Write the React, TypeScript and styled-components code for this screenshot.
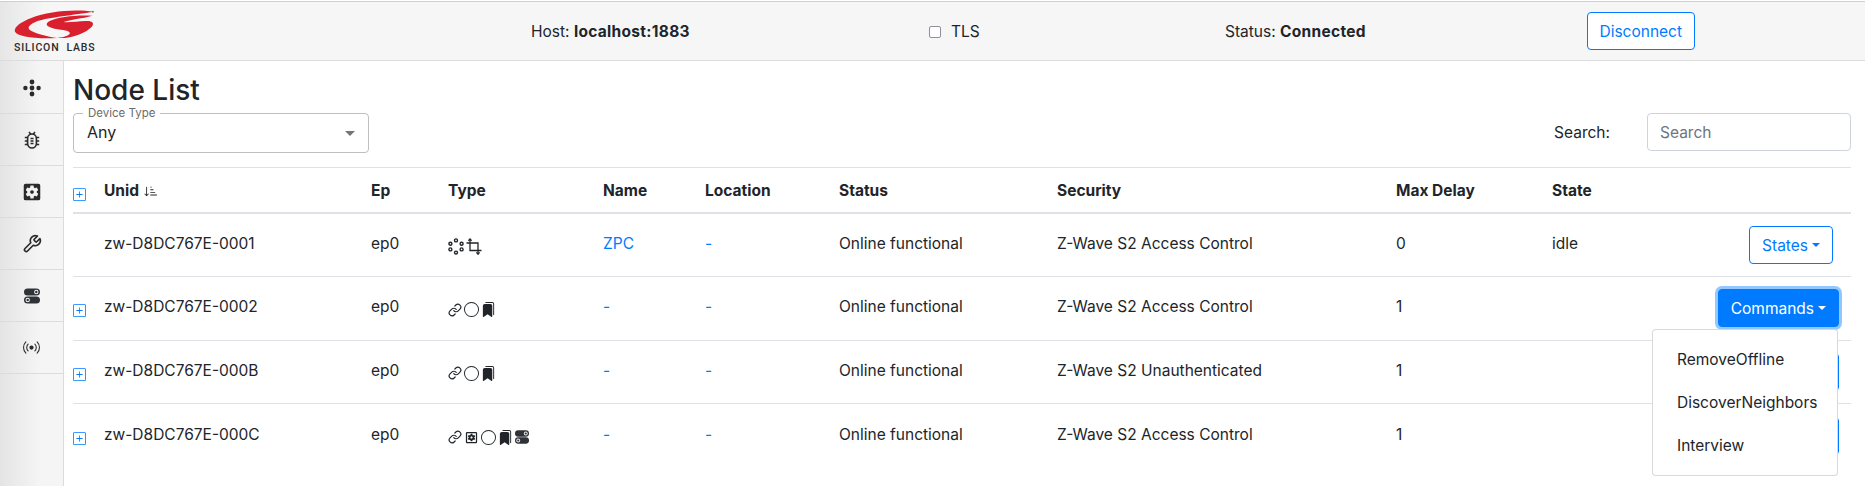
import React from "react";
import styled, {createGlobalStyle} from "styled-components";
import {BsBookmarksFill, BsBroadcast, BsCircle, BsPlusSquare, BsSortDownAlt} from "react-icons/bs";
import {FiLink, FiTool} from "react-icons/fi";
import {MdOutlineSettingsApplications, MdSettingsApplications} from "react-icons/md";

const GlobalStyle = createGlobalStyle`
    html, body {
        margin: 0;
        height: 486px;
        overflow: hidden;
        background: #fff;
        font-family: Inter, "Liberation Sans", sans-serif;
        font-size: 16px;
        color: #212529;
    }
`;

const Page = styled.div`
    width: 1865px;
    height: 486px;
    padding-top: 1px;
    box-sizing: border-box;
    display: flex;
    flex-direction: column;
    overflow: hidden;
`;

const TopBar = styled.header`
    height: 58px;
    flex: none;
    display: flex;
    align-items: center;
    border-top: 1px solid #cfcfcf;
    border-bottom: 1px solid #dcdcdc;
    background: linear-gradient(90deg, #e6e6e6 0, #f6f6f6 44px);
`;

const Logo = styled.div`
    width: 81px;
    margin-left: 14px;
    display: flex;
    flex-direction: column;
    flex: none;
`;

const LogoText = styled.span`
    font-family: Roboto, "Liberation Sans", sans-serif;
    font-size: 10.5px;
    font-weight: 500;
    line-height: 11px;
    letter-spacing: 0.85px;
    margin-top: 2px;
    color: #2b2b2b;
    white-space: pre;
`;

const BarGroup = styled.div`
    display: flex;
    align-items: center;
    margin-left: 436px;
`;

const BarItem = styled.div<{$width: number}>`
    width: ${p => p.$width}px;
    flex: none;
    display: flex;
    align-items: center;
    font-size: 15.5px;
    white-space: pre;

    b {
        letter-spacing: 0.3px;
    }
`;

const TlsBox = styled.span`
    width: 10px;
    height: 10px;
    border: 1.5px solid #8f8f9d;
    border-radius: 2px;
    background: #fff;
    margin-right: 10px;
    margin-top: 2px;
`;

const OutlineButton = styled.button`
    height: 38px;
    padding: 0 12px;
    border: 1px solid #007bff;
    border-radius: 4px;
    background: #fff;
    color: #007bff;
    font: inherit;
    font-size: 15.5px;
    display: inline-flex;
    align-items: center;
`;

const DisconnectButton = styled(OutlineButton)`
    padding: 0 11.5px;
`;

const Caret = styled.span`
    display: inline-block;
    margin-left: 4px;
    border-top: 4.8px solid currentColor;
    border-left: 4.8px solid transparent;
    border-right: 4.8px solid transparent;
`;

const SolidButton = styled(OutlineButton)<{$focused?: boolean}>`
    background: #007bff;
    color: #fff;
    box-shadow: ${p => (p.$focused ? "0 0 0 3px rgba(38, 143, 255, 0.5)" : "none")};
`;

const Body = styled.div`
    flex: 1;
    display: flex;
    min-height: 0;
    position: relative;
`;

const Sidebar = styled.nav`
    width: 63px;
    flex: none;
    padding-top: 1px;
    border-right: 1px solid #dcdcdc;
    background: linear-gradient(90deg, #e4e4e4 0, #f5f5f5 40px);
`;

const SideItem = styled.div`
    height: 51px;
    border-bottom: 1px solid #dcdcdc;
    display: flex;
    align-items: center;
    justify-content: center;
    color: #2a2a2a;
`;

const Main = styled.main`
    flex: 1;
    padding: 0 14px 0 9px;
    min-width: 0;
`;

const Title = styled.h1`
    font-size: 28px;
    font-weight: 500;
    line-height: 34px;
    margin: 12px 0 6px;
`;

const FilterRow = styled.div`
    display: flex;
    justify-content: space-between;
    align-items: flex-start;
    padding-bottom: 14px;
    border-bottom: 1px solid #dee2e6;
`;

const SelectBox = styled.div`
    width: 296px;
    height: 40px;
    box-sizing: border-box;
    border: 1px solid #bfbfbf;
    border-radius: 4px;
    padding: 0 13px 2px;
    display: flex;
    align-items: center;
    justify-content: space-between;
    position: relative;
`;

const SelectLabel = styled.span`
    position: absolute;
    top: -7px;
    left: 9px;
    padding: 0 5px;
    background: #fff;
    font-size: 11.5px;
    line-height: 13px;
    color: #6c6c6c;
`;

const SelectArrow = styled.span`
    margin-top: 2px;
    border-top: 5px solid #757575;
    border-left: 5px solid transparent;
    border-right: 5px solid transparent;
`;

const SearchGroup = styled.div`
    display: flex;
    align-items: center;
    font-size: 15.5px;
`;

const SearchInput = styled.div`
    width: 204px;
    height: 38px;
    box-sizing: border-box;
    margin-left: 37px;
    border: 1px solid #ced4da;
    border-radius: 4px;
    padding: 0 12px;
    display: flex;
    align-items: center;
    color: #6c757d;
`;

const Table = styled.table`
    width: 100%;
    border-collapse: collapse;
    table-layout: fixed;
    font-size: 15.5px;
`;

const HeadCell = styled.th`
    height: 44px;
    padding: 0;
    text-align: left;
    font-weight: 700;
    border-bottom: 2px solid #dee2e6;
    white-space: nowrap;
`;

const Cell = styled.td`
    height: 63.5px;
    box-sizing: border-box;
    padding: 0 0 3px;
    border-bottom: 1px solid #dee2e6;
    white-space: nowrap;
`;

const LastCell = styled(Cell)`
    border-bottom: none;
`;

const Link = styled.span`
    color: #007bff;
`;

const PlusIcon = styled(BsPlusSquare)`
    color: #007bff;
    display: block;
    margin-top: 8px;
`;

const TypeIcons = styled.div`
    display: flex;
    align-items: center;
    gap: 2px;
    margin-top: 6px;
`;

const ActionCell = styled.div`
    display: flex;
    justify-content: flex-end;
    padding: 3px 18px 0 0;
`;

const CommandSlot = styled(ActionCell)`
    padding-right: 12px;
`;

const StateRow = styled.div`
    display: flex;
    align-items: center;
    justify-content: space-between;
`;

const Menu = styled.div`
    position: absolute;
    left: 1652px;
    top: 268px;
    width: 186px;
    height: 147px;
    box-sizing: border-box;
    padding: 8px 0;
    background: #fff;
    border: 1px solid rgba(0, 0, 0, 0.15);
    border-radius: 4px;
`;

const MenuItem = styled.div`
    height: 43px;
    padding-left: 24px;
    display: flex;
    align-items: center;
    font-size: 15.5px;
`;

const SortIcon = styled(BsSortDownAlt)`
    margin-left: 5px;
    vertical-align: -2px;
`;

const NodesSmall = () => (
    <svg width="16" height="17" viewBox="0 0 16 17" fill="none" stroke="#212529" strokeWidth="1.4">
      <circle cx="8" cy="2.4" r="1.5"/>
      <circle cx="2.4" cy="5.8" r="1.5"/>
      <circle cx="13.6" cy="5.8" r="1.5"/>
      <circle cx="2.4" cy="11.4" r="1.5"/>
      <circle cx="13.6" cy="11.4" r="1.5"/>
      <circle cx="8" cy="14.6" r="1.5"/>
    </svg>
);

const CropArrows = () => (
    <svg width="16" height="17" viewBox="0 0 16 17" fill="none" stroke="#212529" strokeWidth="1.3">
      <path d="M4 2v10.5h11.5"/>
      <path d="M0.5 5h11.5v11"/>
      <path d="M2.4 2.8 4 1l1.6 1.8M10.4 14.4 12 16.2l1.6-1.8"/>
    </svg>
);

const NodesCross = () => (
    <svg width="18" height="18" viewBox="0 0 18 18" fill="#2a2a2a">
      <circle cx="9" cy="3" r="2.4"/>
      <circle cx="9" cy="15" r="2.4"/>
      <circle cx="2.4" cy="9" r="2.2"/>
      <circle cx="15.6" cy="9" r="2.2"/>
      <circle cx="9" cy="9" r="2.4"/>
    </svg>
);

const BugOutline = () => (
    <svg width="16" height="18" viewBox="0 0 16 18" fill="none" stroke="#2a2a2a" strokeWidth="1.6">
      <rect x="3.6" y="3" width="8.8" height="14" rx="4.4"/>
      <path d="M5 1l2 2.4M11 1 9 3.4M0.8 6.5h2.8M12.4 6.5h2.8M0.8 10h2.8M12.4 10h2.8M0.8 13.5h2.8M12.4 13.5h2.8"/>
      <path d="M6.5 7.5h3M6.5 10h3M6.5 12.5h3"/>
    </svg>
);

const TogglePills = ({size}: {size: number}) => (
    <svg width={size} height={size} viewBox="0 0 16 16">
      <rect x="0" y="0.4" width="16" height="7.2" rx="3.6" fill="#2f3338"/>
      <rect x="0" y="8.4" width="16" height="7.2" rx="3.6" fill="#2f3338"/>
      <circle cx="12.3" cy="4" r="2.2" fill="#f5f5f5"/>
      <circle cx="12.3" cy="4" r="1.2" fill="#2f3338"/>
      <circle cx="3.7" cy="12" r="2.2" fill="#f5f5f5"/>
      <circle cx="3.7" cy="12" r="1.2" fill="#2f3338"/>
    </svg>
);

const LogoMark = () => (
    <svg width="81" height="30" viewBox="0 0 240 90">
      <g fill="#d9202f">
        <path d="M238 5C180 -4 100 4 50 24C14 38 -4 54 2 66C8 78 60 88 128 84C100 80 60 70 46 60C36 52 48 40 72 32C100 23 180 14 238 5Z"/>
        <path d="M233 17C190 14 130 20 104 34C88 44 100 52 120 56C145 60 168 62 166 70C165 76 150 82 128 84C175 86 215 68 232 50C240 40 235 32 214 33C190 34 160 38 148 36C165 28 205 26 233 17Z"/>
      </g>
      <circle cx="235" cy="5" r="3" fill="#777"/>
    </svg>
);

const Bar = () => (
    <TopBar>
      <Logo>
        <LogoMark/>
        <LogoText>SILICON  LABS</LogoText>
      </Logo>
      <BarGroup>
        <BarItem $width={398}>Host: <b>localhost:1883</b></BarItem>
        <BarItem $width={296}><TlsBox/>TLS</BarItem>
        <BarItem $width={362}>Status: <b>Connected</b></BarItem>
        <DisconnectButton>Disconnect</DisconnectButton>
      </BarGroup>
    </TopBar>
);

const sideIcons = [
  <NodesCross key="nodes"/>,
  <BugOutline key="bug"/>,
  <MdSettingsApplications key="app" size={22}/>,
  <FiTool key="tool" size={20}/>,
  <TogglePills key="toggles" size={16}/>,
  <BsBroadcast key="broadcast" size={17}/>,
];

type RowData = {
  unid: string;
  plus: boolean;
  icons: React.ReactNode;
  name: string;
  security: string;
  delay: string;
  state: string;
  action: React.ReactNode;
};

const linkIcons = (
    <>
      <FiLink size={14}/>
      <BsCircle size={15}/>
      <BsBookmarksFill size={15}/>
    </>
);

const rows: RowData[] = [
  {
    unid: "zw-D8DC767E-0001",
    plus: false,
    icons: (
        <>
          <NodesSmall/>
          <CropArrows/>
        </>
    ),
    name: "ZPC",
    security: "Z-Wave S2 Access Control",
    delay: "0",
    state: "idle",
    action: <ActionCell><OutlineButton>States<Caret/></OutlineButton></ActionCell>,
  },
  {
    unid: "zw-D8DC767E-0002",
    plus: true,
    icons: linkIcons,
    name: "-",
    security: "Z-Wave S2 Access Control",
    delay: "1",
    state: "",
    action: <CommandSlot><SolidButton $focused>Commands<Caret/></SolidButton></CommandSlot>,
  },
  {
    unid: "zw-D8DC767E-000B",
    plus: true,
    icons: linkIcons,
    name: "-",
    security: "Z-Wave S2 Unauthenticated",
    delay: "1",
    state: "",
    action: <CommandSlot><SolidButton>Commands<Caret/></SolidButton></CommandSlot>,
  },
  {
    unid: "zw-D8DC767E-000C",
    plus: true,
    icons: (
        <>
          <FiLink size={14}/>
          <MdOutlineSettingsApplications size={15}/>
          <BsCircle size={15}/>
          <BsBookmarksFill size={15}/>
          <TogglePills size={14}/>
        </>
    ),
    name: "-",
    security: "Z-Wave S2 Access Control",
    delay: "1",
    state: "",
    action: <CommandSlot><SolidButton>Commands<Caret/></SolidButton></CommandSlot>,
  },
];

const columns = [31, 267, 77, 155, 102, 134, 218, 339, 156, 299];

export default function App() {
  return (
      <Page>
        <GlobalStyle/>
        <Bar/>
        <Body>
          <Sidebar>
            {sideIcons.map(icon => <SideItem key={icon.key}>{icon}</SideItem>)}
          </Sidebar>
          <Main>
            <Title>Node List</Title>
            <FilterRow>
              <SelectBox>
                <SelectLabel>Device Type</SelectLabel>
                Any
                <SelectArrow/>
              </SelectBox>
              <SearchGroup>
                Search:
                <SearchInput>Search</SearchInput>
              </SearchGroup>
            </FilterRow>
            <Table>
              <colgroup>
                {columns.map((w, i) => <col key={i} style={{width: w}}/>)}
              </colgroup>
              <thead>
              <tr>
                <HeadCell><PlusIcon size={13}/></HeadCell>
                <HeadCell>Unid<SortIcon size={14}/></HeadCell>
                <HeadCell>Ep</HeadCell>
                <HeadCell>Type</HeadCell>
                <HeadCell>Name</HeadCell>
                <HeadCell>Location</HeadCell>
                <HeadCell>Status</HeadCell>
                <HeadCell>Security</HeadCell>
                <HeadCell>Max Delay</HeadCell>
                <HeadCell>State</HeadCell>
              </tr>
              </thead>
              <tbody>
              {rows.map((row, i) => {
                const C = i === rows.length - 1 ? LastCell : Cell;
                return (
                    <tr key={row.unid}>
                      <C>{row.plus && <PlusIcon size={13}/>}</C>
                      <C>{row.unid}</C>
                      <C>ep0</C>
                      <C><TypeIcons>{row.icons}</TypeIcons></C>
                      <C><Link>{row.name}</Link></C>
                      <C><Link>-</Link></C>
                      <C>Online functional</C>
                      <C>{row.security}</C>
                      <C>{row.delay}</C>
                      <C>
                        {row.state ? (
                            <StateRow>
                              <span>{row.state}</span>
                              {row.action}
                            </StateRow>
                        ) : row.action}
                      </C>
                    </tr>
                );
              })}
              </tbody>
            </Table>
          </Main>
          <Menu>
            <MenuItem>RemoveOffline</MenuItem>
            <MenuItem>DiscoverNeighbors</MenuItem>
            <MenuItem>Interview</MenuItem>
          </Menu>
        </Body>
      </Page>
  );
}
